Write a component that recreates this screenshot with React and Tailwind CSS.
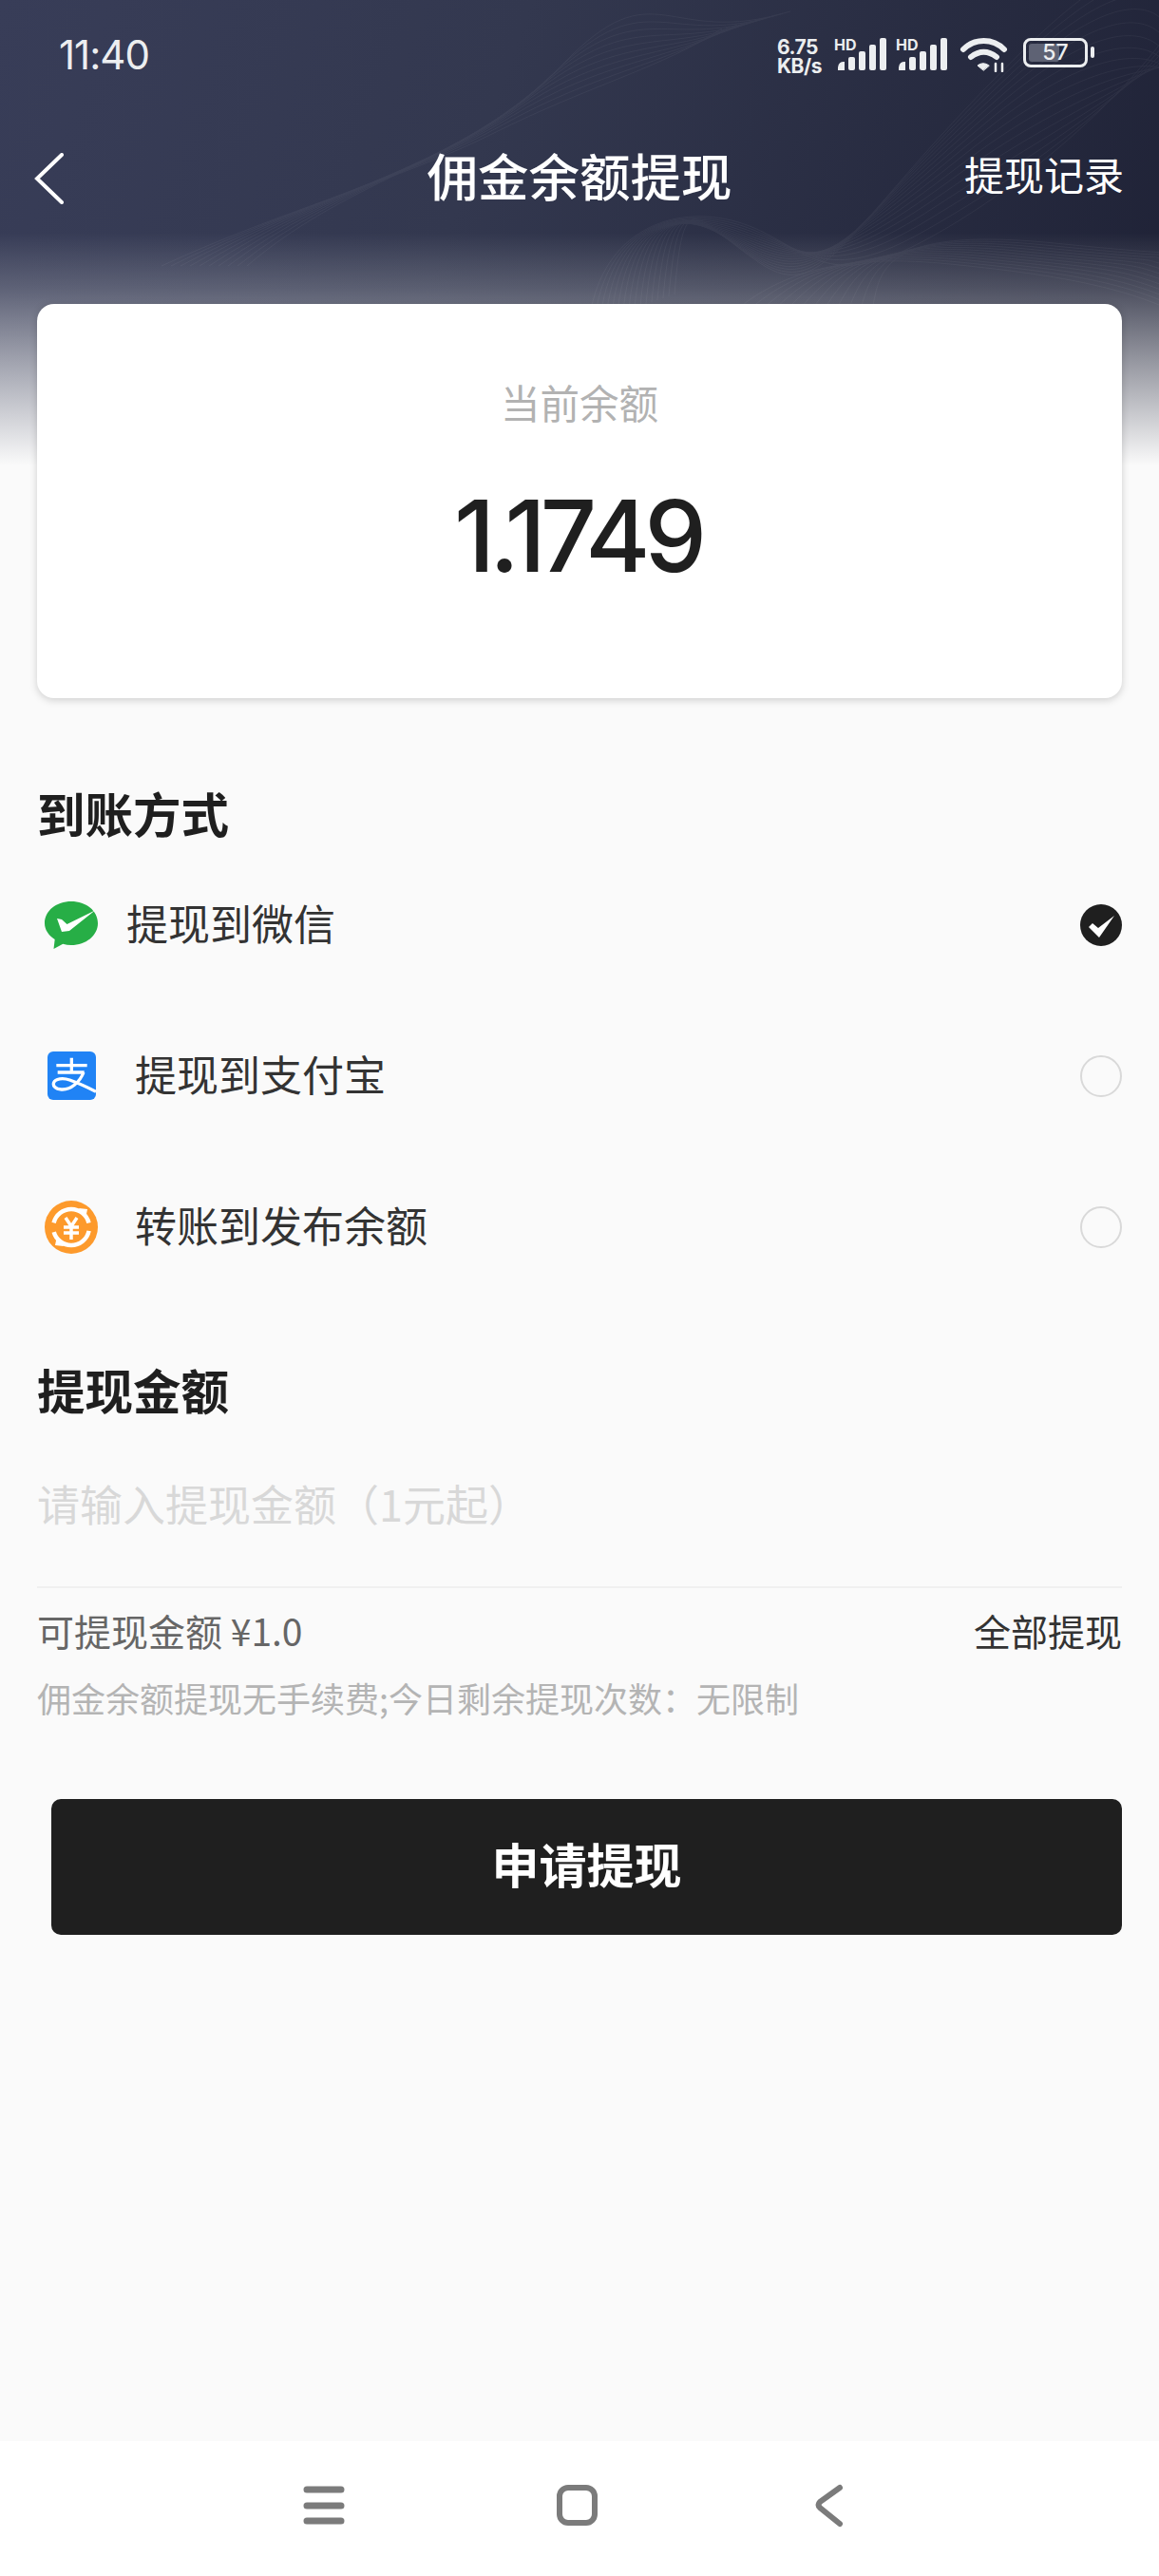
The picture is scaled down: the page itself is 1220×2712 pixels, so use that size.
const cjk = "font-['Noto_Sans_CJK_SC','Noto_Sans',sans-serif]";

function Waves() {
  const lines = [];
  for (let i = 0; i < 16; i++) {
    lines.push(`M${620 + i * 6} ${340 - i * 2} C${630 + i * 6} ${250 - i * 4} ${700 + i * 2} ${215 + i} ${770 + i * 2} ${232 + i * 3} S${860 + i * 2} ${310 - i * 5} ${960 + i * 8} ${260 - i * 14} S${1180 + i * 6} ${110 - i * 6} ${1240} ${20 + i * 8}`);
  }
  for (let i = 0; i < 12; i++) {
    lines.push(`M${760 + i * 14} 340 C${820 + i * 10} ${280 + i * 2} ${900} ${268 - i * 3} ${1000 + i * 10} ${278 - i * 2} S${1180} ${300 - i * 4} ${1240} ${330 - i * 6}`);
  }
  for (let i = 0; i < 10; i++) {
    lines.push(`M${170 + i * 10} 280 C${300 + i * 8} ${220 - i * 4} ${420 + i * 8} ${190 - i * 2} ${520 + i * 8} ${140 - i * 8} S${700} ${70 - i * 2} ${760 + i * 8} ${30 - i * 2}`);
  }
  return (
    <svg className="absolute left-0 top-0 opacity-[0.045]" width="1220" height="330" viewBox="0 0 1220 330" fill="none">
      {lines.map((d, i) => <path key={i} d={d} stroke="#fff" strokeWidth="1" />)}
    </svg>
  );
}

function Signal() {
  return (
    <svg width="52" height="34" viewBox="0 0 52 34" fill="#eceef0">
      <path d="M1 34v-3a6 6 0 0 1 7-6v9z" />
      <rect x="12" y="20" width="7" height="14" rx="2" />
      <rect x="23" y="14" width="7" height="20" rx="2" />
      <rect x="34" y="7" width="7" height="27" rx="2" />
      <rect x="45" y="0" width="7" height="34" rx="2" />
    </svg>
  );
}

function StatusBar() {
  return (
    <div className="relative h-[130px] flex justify-between items-start pt-[38px] pl-[62px] pr-[68px] text-[#eceef0]">
      <span className="font-['Inter',sans-serif] text-[42px] leading-[40px] tracking-[-1px]">11:40</span>
      <div className="flex items-start mt-[2px]">
        <div className="w-[60px] font-['Inter',sans-serif] font-bold text-[21px] leading-[20px] tracking-[-0.5px] whitespace-nowrap">
          <div>6.75</div>
          <div>KB/s</div>
        </div>
        <div className="relative w-[65px] h-[36px]">
          <span className="absolute left-0 top-[-1px] font-['Inter',sans-serif] font-bold text-[16px] leading-[16px]">HD</span>
          <div className="absolute left-[3px] top-0"><Signal /></div>
        </div>
        <div className="relative w-[65px] h-[36px]">
          <span className="absolute left-0 top-[-1px] font-['Inter',sans-serif] font-bold text-[16px] leading-[16px]">HD</span>
          <div className="absolute left-[2px] top-0"><Signal /></div>
        </div>
        <svg className="ml-[2px]" width="52" height="36" viewBox="0 0 52 36" fill="none" stroke="#eceef0" strokeWidth="6" strokeLinecap="round">
          <path d="M4 12C16 0 35 0 47 12" />
          <path d="M12 20c9-7 18-7 27 0" />
          <path d="M25 34l-6-5c4-3 8-3 12 0z" fill="#eceef0" strokeWidth="1" />
          <path d="M38 27v8M45 27v8" strokeWidth="2.500" />
        </svg>
        <div className="relative ml-[15px] w-[68px] h-[31px] rounded-[8px] border-[3px] border-[#eceef0] p-[3px]">
          <div className="w-[32px] h-full rounded-[3px] bg-[#5e6274]" />
          <span className="absolute inset-0 flex items-center justify-center font-['Inter',sans-serif] font-medium text-[23px] leading-none">57</span>
        </div>
        <div className="ml-[3px] mt-[9px] w-[4px] h-[12px] rounded-[2px] bg-[#eceef0]" />
      </div>
    </div>
  );
}

function WechatIcon() {
  return (
    <svg width="56" height="50" viewBox="0 0 56 50">
      <path d="M28 0c15.500 0 28 9.700 28 23 0 13-12.500 23-28 23-3 0-6-.4-8.800-1.200L9.500 50l1.200-10C4 35.500 0 29.700 0 23 0 9.700 12.500 0 28 0z" fill="#27ae46" />
      <path d="M13 18l5 1 5.500 5L53 9.500 26 31 18 32z" fill="#fff" />
    </svg>
  );
}

function AlipayIcon() {
  return (
    <svg width="51" height="51" viewBox="0 0 153 153">
      <rect width="153" height="153" rx="18" fill="#2083f5" />
      <g fill="none" stroke="#fff" strokeWidth="10">
        <path d="M28 44h97M76 20v44M32 66h84" />
        <path d="M114 66c-12 30-40 56-70 54-20-1-28-12-24-22 5-12 28-16 50-8 28 10 58 24 83 37" />
      </g>
    </svg>
  );
}

function OrangeIcon() {
  return (
    <svg width="56" height="56" viewBox="0 0 56 56">
      <circle cx="28" cy="28" r="28" fill="#fd9a2c" />
      <circle cx="28" cy="28" r="19" fill="none" stroke="#fff" strokeWidth="4.500" strokeDasharray="50 10" strokeDashoffset="-4" />
      <path d="M36 8l9 1-2 10zM20 48l-9-1 2-10z" fill="#fff" />
      <path d="M22 18l6 9 6-9M20 28h16M20 34h16M28 27v14" fill="none" stroke="#fff" strokeWidth="3.500" />
    </svg>
  );
}

function PayRow({ icon, label, textLeft, checked }) {
  return (
    <div className="h-[159px] flex items-center">
      <div className={`flex items-center justify-center w-[56px] ml-[8px] ${textLeft}`}>{icon}</div>
      <span className="flex-1 pb-[6px] text-[44px] leading-[60px] text-[#333]">{label}</span>
      {checked ? (
        <svg width="44" height="44" viewBox="0 0 44 44">
          <circle cx="22" cy="22" r="22" fill="#1f1f1f" />
          <path d="M9 24l4-4 6 5L36 12 20 35z" fill="#fff" />
        </svg>
      ) : (
        <div className="w-[44px] h-[44px] rounded-full border-2 border-[#d9d9d9]" />
      )}
    </div>
  );
}

export default function App() {
  return (
    <div className={`relative w-[1220px] h-[2712px] flex flex-col overflow-hidden bg-[#fafafa] ${cjk}`}>
      <div className="absolute left-0 top-0 w-full h-[490px] bg-[linear-gradient(180deg,rgba(250,250,250,0)_0%,rgba(250,250,250,0)_50%,rgba(250,250,250,0.2)_62%,rgba(250,250,250,0.55)_78%,#fafafa_100%),linear-gradient(110deg,#383d58_0%,#33384f_40%,#1e2135_100%)]" />
      <Waves />
      <StatusBar />

      <div className="relative h-[114px] flex items-center justify-center text-white">
        <svg className="absolute left-[34px] top-[31px]" width="34" height="54" viewBox="0 0 34 54" fill="none" stroke="#fff" strokeWidth="4" strokeLinecap="round">
          <path d="M31 2L5 27l26 25" />
        </svg>
        <h1 className="pb-[6px] text-[53.500px] leading-[70px] font-medium">佣金余额提现</h1>
        <span className="absolute right-[37px] top-[23px] text-[42px] leading-[60px]">提现记录</span>
      </div>

      <div className="relative ml-[39px] mr-[39px] mt-[76px] h-[415px] rounded-[18px] bg-white shadow-[0_2px_8px_rgba(0,0,0,0.18)] flex flex-col items-center pt-[73px]">
        <span className="text-[41.500px] leading-[60px] text-[#b2b2b2]">当前余额</span>
        <span className="mt-[56px] pr-[4px] font-['Inter',sans-serif] font-medium text-[104px] leading-[110px] tracking-[-6px] text-[#1f1f1f]">1.1749</span>
      </div>

      <div className="relative px-[39px]">
        <h2 className="mt-[90px] text-[50.500px] leading-[60px] font-bold text-[#1f1f1f]">到账方式</h2>
        <div className="mt-[9px]">
          <PayRow icon={<WechatIcon />} label="提现到微信" textLeft="mr-[30px]" checked />
          <PayRow icon={<AlipayIcon />} label="提现到支付宝" textLeft="mr-[39px]" />
          <PayRow icon={<OrangeIcon />} label="转账到发布余额" textLeft="mr-[39px]" />
        </div>

        <h2 className="mt-[61px] text-[50.500px] leading-[60px] font-bold text-[#1f1f1f]">提现金额</h2>
        <div className="mt-[61px] h-[119px] border-b-2 border-[#f0f0f0]">
          <input
            className="w-full h-[60px] bg-transparent outline-none text-[45px] placeholder:text-[#d8d8d8]"
            placeholder="请输入提现金额（1元起）"
          />
        </div>
        <div className="mt-[14px] flex items-center justify-between h-[60px]">
          <span className="text-[39px] leading-[60px] text-[#666]">可提现金额 ¥1.0</span>
          <span className="text-[39px] leading-[60px] text-[#333]">全部提现</span>
        </div>
        <p className="mt-[11px] text-[36px] leading-[60px] text-[#b4b4b4]">佣金余额提现无手续费;今日剩余提现次数：无限制</p>
        <button className="mt-[77px] ml-[15px] w-[1127px] h-[143px] pb-[8px] rounded-[10px] bg-[#1f1f1f] text-white text-[50px] font-bold">申请提现</button>
      </div>

      <div className="absolute left-0 bottom-0 w-full h-[142px] bg-white">
        <svg width="1220" height="142" viewBox="0 0 1220 142" fill="none" stroke="#7b7b7b">
          <path d="M323 51h36M323 68h36M323 84h36" strokeWidth="7" strokeLinecap="round" />
          <rect x="589" y="49" width="37" height="37" rx="9" strokeWidth="6" />
          <path d="M884 49L863 64q-3 3 0 6l21 17" strokeWidth="6" strokeLinecap="round" />
        </svg>
      </div>
    </div>
  );
}
